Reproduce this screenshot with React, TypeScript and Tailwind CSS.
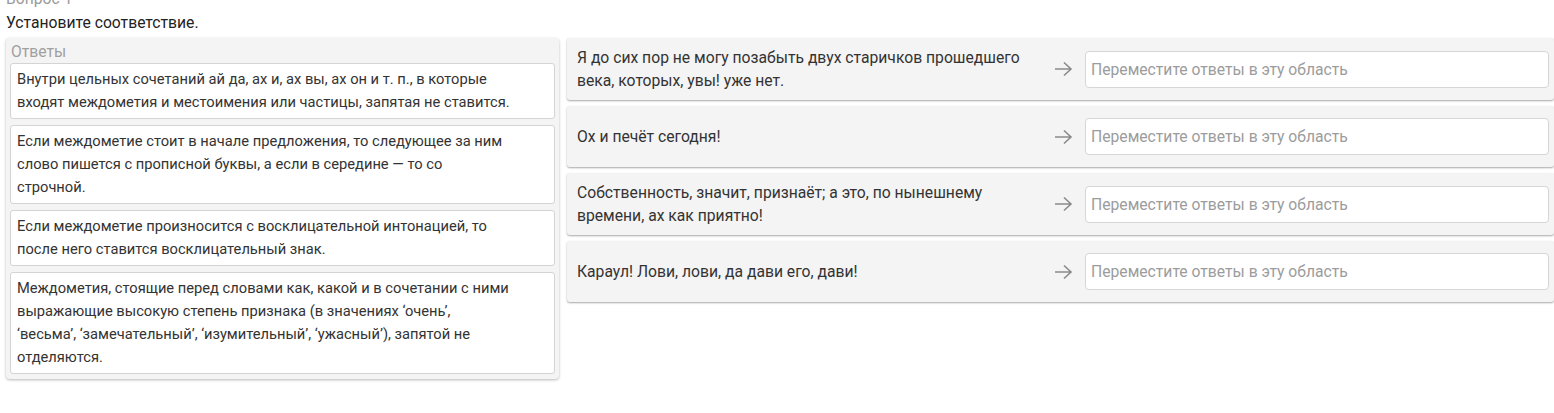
const answers = [
  "Внутри цельных сочетаний ай да, ах и, ах вы, ах он и т. п., в которые входят междометия и местоимения или частицы, запятая не ставится.",
  "Если междометие стоит в начале предложения, то следующее за ним слово пишется с прописной буквы, а если в середине — то со строчной.",
  "Если междометие произносится с восклицательной интонацией, то после него ставится восклицательный знак.",
  "Междометия, стоящие перед словами как, какой и в сочетании с ними выражающие высокую степень признака (в значениях ‘очень’, ‘весьма’, ‘замечательный’, ‘изумительный’, ‘ужасный’), запятой не отделяются.",
];

const questions = [
  "Я до сих пор не могу позабыть двух старичков прошедшего века, которых, увы! уже нет.",
  "Ох и печёт сегодня!",
  "Собственность, значит, признаёт; а это, по нынешнему времени, ах как приятно!",
  "Караул! Лови, лови, да дави его, дави!",
];

function Arrow() {
  return (
    <svg width="19" height="16" viewBox="0 0 19 16" fill="none">
      <path d="M1 8h16M10 1.5l7 6.5-7 6.5" stroke="#8a8a8a" strokeWidth="1.6" />
    </svg>
  );
}

export default function App() {
  return (
    <div className="w-[1554px] h-[413px] overflow-hidden bg-white font-['Roboto',sans-serif] text-[15.7px] leading-[23px] text-[#333]">
      <div className="px-[6px]">
        <div className="-mt-[13px] text-[#9a9a9a]">Вопрос 1</div>
        <div className="mt-[1px] text-[#222]">Установите соответствие.</div>
      </div>

      <div className="flex items-start gap-[8px] pl-[6px] mt-[4px]">
        <div className="w-[553px] shrink-0 rounded-[4px] bg-[#f4f4f4] shadow-[0_1px_3px_rgba(0,0,0,0.28)] px-[4px] pt-[2px] pb-[5px]">
          <div className="text-[#a0a0a0] leading-[23px] pl-[1px]">Ответы</div>
          <div className="flex flex-col gap-[6px]">
            {answers.map((a, i) => (
              <div
                key={i}
                className="bg-white border border-[#d4d4d4] rounded-[3px] pl-[6px] pr-[43px] py-[4px] text-[14.7px] text-[#333]"
              >
                {a}
              </div>
            ))}
          </div>
        </div>

        <div className="flex-1 flex flex-col gap-[6px]">
          {questions.map((q, i) => (
            <div
              key={i}
              className="flex items-center min-h-[61px] bg-[#f4f4f4] rounded-[3px] shadow-[0_1px_2px_rgba(0,0,0,0.35)] pl-[10px] py-[8px]"
            >
              <div className="w-[462px] shrink-0">{q}</div>
              <div className="w-[34px] shrink-0 flex justify-end">
                <Arrow />
              </div>
              <div className="ml-[12px] mr-[5px] flex-1 h-[37px] bg-white border border-[#d6d6d6] rounded-[4px] flex items-center px-[5px] text-[#9c9c9c]">
                Переместите ответы в эту область
              </div>
            </div>
          ))}
        </div>
      </div>
    </div>
  );
}
